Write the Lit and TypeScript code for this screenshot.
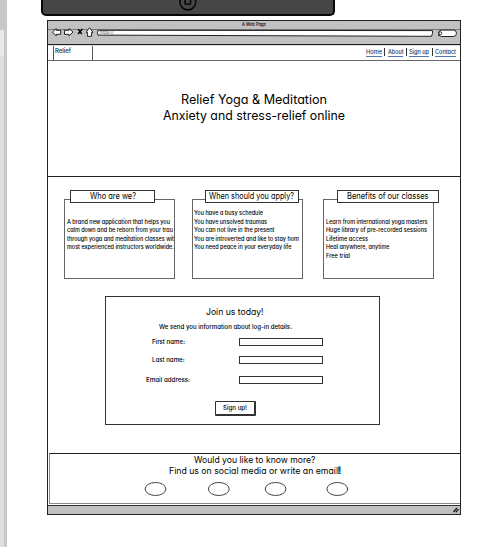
import { LitElement, html, css, svg } from "lit";
import { customElement, property } from "lit/decorators.js";

/** One line of lettering, spaced out to a given width. */
@customElement("sketch-text")
class SketchText extends LitElement {
  @property() text = "";
  @property({ type: Number }) width = 100;
  @property({ type: Number }) size = 6;
  @property({ type: Number }) line = 9;

  static styles = css`
    :host { display: block; flex: none; }
    svg { display: block; overflow: visible; }
    text {
      font-family: Inter, "Noto Sans", sans-serif;
      font-feature-settings: "cv11";
      font-weight: 500;
      fill: currentColor;
    }
    text.large { font-weight: 430; }
  `;

  render() {
    const base = this.line / 2 + this.size * 0.36;
    return html`<svg width=${this.width} height=${this.line}>
      <text class=${this.size > 8 ? "large" : ""} x="0" y=${base} font-size=${this.size} textLength=${this.width} lengthAdjust="spacingAndGlyphs">${this.text}</text>
    </svg>`;
  }
}

const t = (text: string, width: number, size: number, line: number) =>
  html`<sketch-text .text=${text} .width=${width} .size=${size} .line=${line}></sketch-text>`;

type Line = [string, number];
const cards: { kind: string; title: Line; lines: Line[] }[] = [
  {
    kind: "who",
    title: ["Who are we?", 46],
    lines: [
      ["A brand new application that helps you", 103],
      ["calm down and be reborn from your trau", 106],
      ["through yoga and meditation classes wit", 107],
      ["most experienced instructors worldwide.", 107],
    ],
  },
  {
    kind: "when",
    title: ["When should you apply?", 85],
    lines: [
      ["You have a busy schedule", 69],
      ["You have unsolved traumas", 73],
      ["You can not live in the present", 80.5],
      ["You are introverted and like to stay hom", 105],
      ["You need peace in your everyday life", 97.5],
    ],
  },
  {
    kind: "benefits",
    title: ["Benefits of our classes", 81.5],
    lines: [
      ["Learn from international yoga masters", 101.5],
      ["Huge library of pre-recorded sessions", 101],
      ["Lifetime access", 42],
      ["Heal anywhere, anytime", 63.5],
      ["Free trial", 24],
    ],
  },
];

const links: Line[] = [["Home", 16], ["About", 15.5], ["Sign up", 20], ["Contact", 21]];
const fields: Line[] = [["First name:", 33], ["Last name:", 32.5], ["Email address:", 44]];

@customElement("app-root")
class AppRoot extends LitElement {
  static styles = css`
    * { box-sizing: border-box; }
    :host {
      display: flex;
      width: 502px;
      height: 547px;
      overflow: hidden;
      background: #fff;
      color: #000;
    }
    .rail {
      flex: none;
      width: 7px;
      border-right: 3px solid #c8c8ca;
      background: linear-gradient(#c8c8ca 30px, #e9e9e9 30px, #e9e9e9 56px, #e0e0e0 56px);
    }
    .canvas { flex: none; width: 495px; }
    .tablet {
      width: 294px;
      height: 16px;
      margin-left: 34px;
      border: 2px solid #080808;
      border-top: 0;
      border-radius: 0 0 5px 5px;
      background: #464646;
    }
    .tablet svg { display: block; margin-left: 135px; }
    .window {
      display: flex;
      flex-direction: column;
      width: 414px;
      height: 495px;
      margin: 4px 0 0 40px;
      border: 1px solid #222;
    }
    .titlebar {
      display: flex;
      justify-content: center;
      height: 9px;
      background: #c1c1c1;
      border-bottom: 1px solid #777;
    }
    .toolbar { height: 15px; background: #c1c1c1; border-bottom: 1px solid #1c1c1c; }
    .toolbar svg { display: block; overflow: visible; }
    .nav {
      display: flex;
      height: 16px;
      border-bottom: 1px solid #666;
      border-top: 1px solid #ddd;
      padding-left: 5px;
    }
    .brand { width: 40px; height: 14px; border: 1px solid #555; border-width: 0 1px; padding: 0 0 0 1px; }
    .brand, .links { color: #0d3a70; }
    .brand { color: #0a2a48; }
    .links { display: flex; margin-left: auto; padding: 2px 4px 0 0; }
    .link { height: 8.5px; border-bottom: 1px solid #4f76ab; }
    .sep { width: 1px; height: 8px; background: #333; margin: 0 2.5px; }
    .hero {
      display: flex;
      flex-direction: column;
      align-items: center;
      height: 116px;
      padding-top: 31px;
      border-bottom: 1px solid #222;
    }
    .cards { display: flex; gap: 17px; height: 119px; padding: 13px 0 0 16px; }
    .card { width: 111px; }
    .benefits { margin-left: 3px; }
    .head {
      position: relative;
      display: flex;
      justify-content: center;
      height: 13px;
      border: 1px solid #333;
      background: #fff;
    }
    .who .head { width: 85px; margin-left: 6px; }
    .when .head { width: 94px; margin-left: 13px; padding-right: 2px; }
    .benefits .head { width: 102px; margin-left: 14px; }
    .body { height: 80px; margin-top: -4px; border: 1px solid #666; padding: 17.5px 0 0 2px; }
    .when .body { padding-top: 9px; padding-left: 1px; }
    .form {
      display: flex;
      flex-direction: column;
      width: 275px;
      height: 129px;
      margin-left: 57px;
      border: 1px solid #333;
      padding-top: 7px;
    }
    .join { margin-left: 100px; }
    .note { margin-left: 53px; margin-top: 1px; }
    .fields { display: grid; grid-template: 18px 20px 18px / 93px 84px; margin: 4px 0 0 40px; }
    .label { display: flex; justify-content: center; width: 44px; padding-top: 1px; }
    .input { height: 8px; border: 1px solid #333; margin-top: 1px; }
    .button {
      display: flex;
      justify-content: center;
      width: 41px;
      height: 15px;
      margin: 8px 0 0 109px;
      border: 1px solid #333;
      border-width: 1px 2px 2px 1px;
      border-radius: 1px;
    }
    .gap { flex: 1; }
    .foot {
      flex: none;
      display: flex;
      flex-direction: column;
      align-items: center;
      height: 51px;
      margin-left: 1px;
      border: 1px solid #222;
      border-right: 0;
      border-left-color: #888;
      border-bottom-color: #888;
    }
    .foot svg { display: block; align-self: flex-start; }
    .status { flex: none; height: 9px; margin-top: 1px; border-top: 1px solid #333; background: #c1c1c1; }
    .status svg { display: block; margin-left: auto; }
    .mark { background: linear-gradient(#6db4e8, #6db4e8) right 1px / 3px 8px no-repeat; }
  `;

  render() {
    return html`
      <div class="rail"></div>
      <div class="canvas">
        <div class="tablet">
          <svg width="20" height="12" viewBox="0 0 20 12" fill="none" stroke="#080808" stroke-width="1.6">
            <circle cx="9.8" cy="2" r="7.9" />
            <rect x="7" y="-3" width="5.6" height="7.2" rx="1.2" />
          </svg>
        </div>
        <div class="window">
          <div class="titlebar">${t("A Web Page", 24, 4.2, 6)}</div>
          <div class="toolbar">
            <svg width="412" height="14" viewBox="48 29.7 412 14" fill="#fff" stroke="#222" stroke-width="1">
              <path d="M52.5 31.7 L56.2 28.3 V30 H60.7 V34 H56.2 V35.6 Z" />
              <path d="M73 31.7 L69 28.2 V30 H64.5 V34 H69 V35.6 Z" />
              <path d="M78.2 28.8 L81.8 33.8 M82.4 28.8 L78 33.8" stroke="#000" stroke-width="1.5" />
              <path d="M89.5 27.5 L93 32 H91.6 V36 H87.4 V32 H86 Z" />
              <path d="M98 30 L432.5 30.3 V33 L431.5 36 L98 34.8 Q96.8 32.5 98 30 Z" />
              <text x="99.5" y="34" font-size="4.3" font-family="Inter, sans-serif" textLength="14" fill="#555" stroke="none">https://</text>
              <rect x="438.5" y="29.8" width="18" height="6.4" rx="3.2" />
              <circle cx="440.3" cy="33" r="1.5" fill="none" stroke-width=".9" />
              <path d="M439.3 34.2 L438.2 35.6" />
            </svg>
          </div>
          <div class="nav">
            <div class="brand">${t("Relief", 16, 6, 9)}</div>
            <div class="links">
              ${links.map(([s, w], i) => html`${i ? html`<div class="sep"></div>` : ""}
                <div class="link">${t(s, w, 5.7, 8)}</div>`)}
            </div>
          </div>
          <div class="hero">
            ${t("Relief Yoga & Meditation", 146, 12.4, 16)}
            ${t("Anxiety and stress-relief online", 182, 12.4, 16)}
          </div>
          <div class="cards">
            ${cards.map((c) => html`<div class="card ${c.kind}">
              <div class="head">${t(c.title[0], c.title[1], 8.6, 10)}</div>
              <div class="body">${c.lines.map(([s, w]) => t(s, w, 5.5, 8.5))}</div>
            </div>`)}
          </div>
          <div class="form">
            <div class="join">${t("Join us today!", 57.5, 9, 15)}</div>
            <div class="note">${t("We send you information about log-in details.", 133, 6.2, 13)}</div>
            <div class="fields">
              ${fields.map(([s, w]) => html`
                <div class="label">${t(s, w, 6.5, 7)}</div><div class="input"></div>`)}
            </div>
            <div class="button">${t("Sign up!", 24, 6.5, 12)}</div>
          </div>
          <div class="gap"></div>
          <div class="foot">
            ${t("Would you like to know more?", 121.5, 9, 11)}
            <div class="mark">${t("Find us on social media or write an email!", 171.5, 9, 11)}</div>
            <svg width="411" height="26" viewBox="50 476 411 26" fill="#fff" stroke="#444" stroke-width="1">
              ${[155.5, 218.8, 275.6, 337.3].map((x) => svg`<ellipse cx=${x} cy="489" rx="10.4" ry="6.5" />`)}
            </svg>
          </div>
          <div class="status">
            <svg width="8" height="8" viewBox="0 0 8 8" stroke="#111" stroke-width="1.2"><path d="M1.5 6 L5 2 M3.8 6.3 L6.5 3.2" /></svg>
          </div>
        </div>
      </div>
    `;
  }
}
